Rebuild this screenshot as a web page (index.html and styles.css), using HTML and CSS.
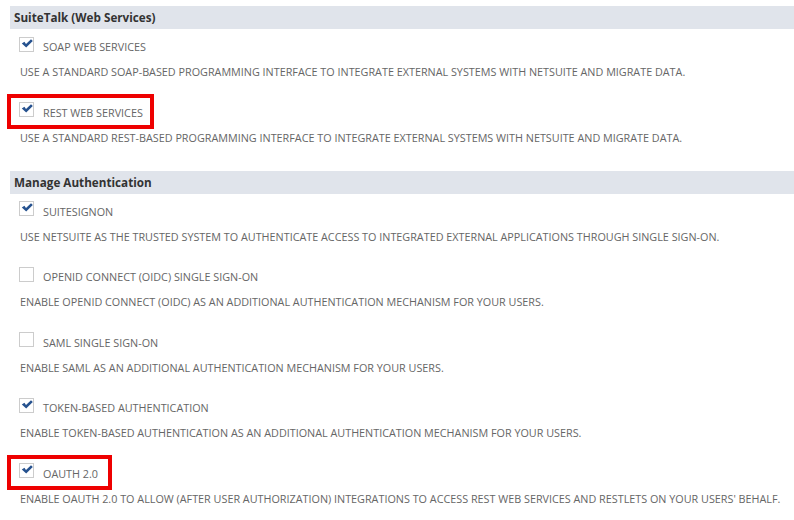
FILE: index.html
```html
<!DOCTYPE html>
<html>
<head>
<meta charset="utf-8">
<link rel="stylesheet" href="styles.css">
</head>
<body>
<div class="page">
  <section class="section">
    <div class="header">SuiteTalk (Web Services)</div>
    <div class="item">
      <div class="checkrow"><span class="cb checked"><svg viewBox="0 0 14 14"><path d="M1.8 5.6 L4.4 3.8 L6 5.9 L11 1.2 L12.8 3.1 L6.2 9.6 Z" /></svg></span><span class="label">SOAP WEB SERVICES</span></div>
      <div class="desc">USE A STANDARD SOAP-BASED PROGRAMMING INTERFACE TO INTEGRATE EXTERNAL SYSTEMS WITH NETSUITE AND MIGRATE DATA.</div>
    </div>
    <div class="item">
      <div class="checkrow hl hl-rest"><span class="cb checked"><svg viewBox="0 0 14 14"><path d="M1.8 5.6 L4.4 3.8 L6 5.9 L11 1.2 L12.8 3.1 L6.2 9.6 Z" /></svg></span><span class="label">REST WEB SERVICES</span></div>
      <div class="desc">USE A STANDARD REST-BASED PROGRAMMING INTERFACE TO INTEGRATE EXTERNAL SYSTEMS WITH NETSUITE AND MIGRATE DATA.</div>
    </div>
  </section>
  <section class="section">
    <div class="header">Manage Authentication</div>
    <div class="item">
      <div class="checkrow"><span class="cb checked"><svg viewBox="0 0 14 14"><path d="M1.8 5.6 L4.4 3.8 L6 5.9 L11 1.2 L12.8 3.1 L6.2 9.6 Z" /></svg></span><span class="label">SUITESIGNON</span></div>
      <div class="desc">USE NETSUITE AS THE TRUSTED SYSTEM TO AUTHENTICATE ACCESS TO INTEGRATED EXTERNAL APPLICATIONS THROUGH SINGLE SIGN-ON.</div>
    </div>
    <div class="item">
      <div class="checkrow"><span class="cb"></span><span class="label">OPENID CONNECT (OIDC) SINGLE SIGN-ON</span></div>
      <div class="desc">ENABLE OPENID CONNECT (OIDC) AS AN ADDITIONAL AUTHENTICATION MECHANISM FOR YOUR USERS.</div>
    </div>
    <div class="item">
      <div class="checkrow"><span class="cb"></span><span class="label">SAML SINGLE SIGN-ON</span></div>
      <div class="desc">ENABLE SAML AS AN ADDITIONAL AUTHENTICATION MECHANISM FOR YOUR USERS.</div>
    </div>
    <div class="item">
      <div class="checkrow"><span class="cb checked"><svg viewBox="0 0 14 14"><path d="M1.8 5.6 L4.4 3.8 L6 5.9 L11 1.2 L12.8 3.1 L6.2 9.6 Z" /></svg></span><span class="label">TOKEN-BASED AUTHENTICATION</span></div>
      <div class="desc">ENABLE TOKEN-BASED AUTHENTICATION AS AN ADDITIONAL AUTHENTICATION MECHANISM FOR YOUR USERS.</div>
    </div>
    <div class="item">
      <div class="checkrow hl hl-oauth"><span class="cb checked"><svg viewBox="0 0 14 14"><path d="M1.8 5.6 L4.4 3.8 L6 5.9 L11 1.2 L12.8 3.1 L6.2 9.6 Z" /></svg></span><span class="label">OAUTH 2.0</span></div>
      <div class="desc">ENABLE OAUTH 2.0 TO ALLOW (AFTER USER AUTHORIZATION) INTEGRATIONS TO ACCESS REST WEB SERVICES AND RESTLETS ON YOUR USERS' BEHALF.</div>
    </div>
  </section>
</div>
</body>
</html>
```

FILE: styles.css
```css
html, body {
  margin: 0;
  padding: 0;
  background: #ffffff;
}

.page {
  padding: 6px 0 0 10px;
  font-family: "Open Sans", "Liberation Sans", sans-serif;
}

.section {
  padding-bottom: 10.5px;
}

.header {
  height: 23px;
  line-height: 23px;
  background: #e0e4eb;
  color: #333333;
  font-weight: bold;
  font-size: 11.7px;
  padding-left: 4px;
}

.item {
  padding: 8px 0 12.5px 0;
}

.checkrow {
  display: flex;
  width: max-content;
  align-items: center;
  height: 20px;
  margin-left: 9px;
  position: relative;
}

.cb {
  width: 13px;
  height: 13px;
  border: 1px solid #cccccc;
  background: #ffffff;
  margin-top: -6px;
  position: relative;
  flex: none;
}

.cb svg {
  position: absolute;
  left: 0;
  top: 0;
  width: 14px;
  height: 14px;
  fill: #26528f;
}

.label {
  margin-left: 9px;
  font-size: 10.8px;
  color: #666666;
  line-height: 20px;
  white-space: nowrap;
}

.desc {
  margin-top: 5px;
  margin-left: 10px;
  font-size: 10.8px;
  line-height: 20px;
  color: #666666;
  white-space: nowrap;
}

.hl::after {
  content: "";
  position: absolute;
  left: -12px;
  top: -9px;
  bottom: -6px;
  border: 4px solid #ee0000;
}

.hl-rest::after {
  right: -11px;
}

.hl-oauth::after {
  right: -14px;
}
```
